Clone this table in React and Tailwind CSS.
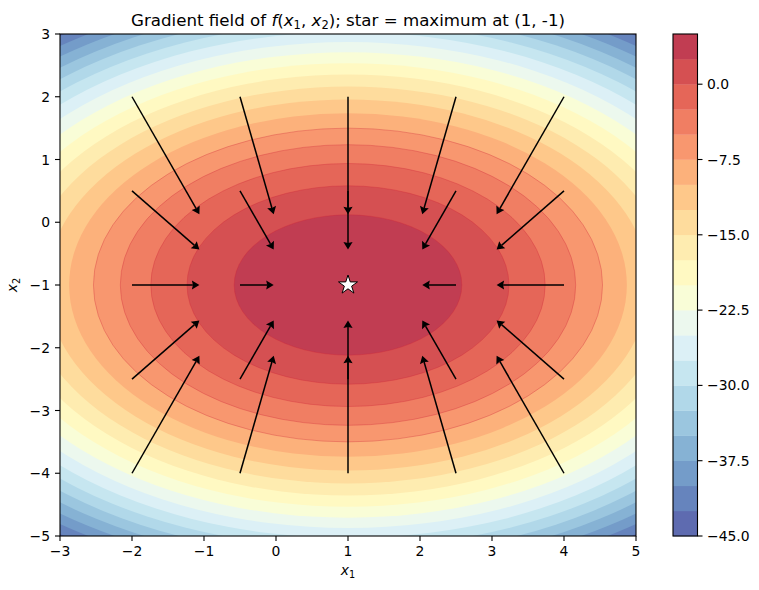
import React from "react";

// RdYlBu control colours (matplotlib), plotted reversed with alpha 0.8
const STOPS = [
  [165, 0, 38], [215, 48, 39], [244, 109, 67], [253, 174, 97], [254, 224, 144],
  [255, 255, 191], [224, 243, 248], [171, 217, 233], [116, 173, 209], [69, 117, 180], [49, 54, 149],
];

const rdylbu = (t) => {
  const s = Math.max(0, Math.min(1, t)) * 10;
  const i = Math.min(9, Math.floor(s));
  const f = s - i;
  const c = STOPS[i].map((v, k) => v + (STOPS[i + 1][k] - v) * f);
  const a = 0.8;
  const [r, g, b] = c.map((v) => Math.round(v * a + 255 * (1 - a)));
  return `rgb(${r},${g},${b})`;
};

// band j spans level -45 + 2.5j .. -45 + 2.5(j+1)
const bandColor = (j) => rdylbu(1 - (j + 0.5) / 20);

const X = (x) => 60 + (x + 3) * 72;
const Y = (y) => 34 + (3 - y) * 62.75;

const GRID = [-2, -0.5, 1, 2.5, 4];
const GRID_Y = [2, 0.5, -1, -2.5, -4];

const arrows = [];
GRID.forEach((gx) => {
  GRID_Y.forEach((gy) => {
    if (gx === 1 && gy === -1) return;
    const k = 0.156;
    const ex = gx + k * -2 * (gx - 1);
    const ey = gy + k * -4 * (gy + 1);
    arrows.push({ sx: X(gx), sy: Y(gy), ex: X(ex), ey: Y(ey) });
  });
});

const Arrow = ({ sx, sy, ex, ey }) => {
  const len = Math.hypot(ex - sx, ey - sy);
  const ux = (ex - sx) / len;
  const uy = (ey - sy) / len;
  const nx = -uy;
  const ny = ux;
  const hl = 7.5;
  const hw = 4.6;
  const notch = 6.5;
  const pts = [
    [ex, ey],
    [ex - ux * hl + nx * hw, ey - uy * hl + ny * hw],
    [ex - ux * notch, ey - uy * notch],
    [ex - ux * hl - nx * hw, ey - uy * hl - ny * hw],
  ]
    .map((p) => p.join(","))
    .join(" ");
  return (
    <g>
      <line x1={sx} y1={sy} x2={ex - ux * notch} y2={ey - uy * notch} stroke="#000" strokeWidth="1.5" />
      <polygon points={pts} fill="#000" />
    </g>
  );
};

const starPoints = (cx, cy, r) => {
  const pts = [];
  for (let i = 0; i < 10; i++) {
    const rr = i % 2 === 0 ? r : r * 0.382;
    const a = -Math.PI / 2 + (i * Math.PI) / 5;
    pts.push(`${cx + rr * Math.cos(a)},${cy + rr * Math.sin(a)}`);
  }
  return pts.join(" ");
};

const Sub = ({ base, sub, size }) => (
  <>
    <tspan fontStyle="italic">{base}</tspan>
    <tspan fontSize={size * 0.7} dy={size * 0.2}>
      {sub}
    </tspan>
  </>
);

const PlotArea = () => {
  const ellipses = [];
  for (let j = 1; j < 20; j++) {
    const R = 50 - 2.5 * j;
    ellipses.push(
      <ellipse
        key={j}
        cx={X(1)}
        cy={Y(-1)}
        rx={Math.sqrt(R) * 72}
        ry={Math.sqrt(R / 2) * 62.75}
        fill={bandColor(j)}
        stroke={j >= 15 ? "rgba(205,35,55,0.45)" : "none"}
        strokeWidth="0.7"
      />
    );
  }

  return (
    <svg width="660" height="556" viewBox="0 34 660 556" className="overflow-visible">
      <defs>
        <clipPath id="axclip">
          <rect x="60" y="34" width="576" height="502" />
        </clipPath>
      </defs>
      <g clipPath="url(#axclip)">
        <rect x="60" y="34" width="576" height="502" fill={bandColor(0)} />
        {ellipses}
      </g>

      {arrows.map((a, i) => (
        <Arrow key={i} {...a} />
      ))}

      <polygon points={starPoints(X(1), Y(-1), 10)} fill="#fff" stroke="#000" strokeWidth="1" />

      <rect x="60" y="34" width="576" height="502" fill="none" stroke="#000" strokeWidth="1.1" />

      {[-3, -2, -1, 0, 1, 2, 3, 4, 5].map((v) => (
        <g key={`x${v}`}>
          <line x1={X(v)} y1="536" x2={X(v)} y2="541" stroke="#000" strokeWidth="1.1" />
          <text x={X(v)} y="556" textAnchor="middle" fontSize="13.9" fill="#000">
            {v < 0 ? `\u2212${-v}` : v}
          </text>
        </g>
      ))}

      {[3, 2, 1, 0, -1, -2, -3, -4, -5].map((v) => (
        <g key={`y${v}`}>
          <line x1="55" y1={Y(v)} x2="60" y2={Y(v)} stroke="#000" strokeWidth="1.1" />
          <text x="50" y={Y(v) + 5} textAnchor="end" fontSize="13.9" fill="#000">
            {v < 0 ? `\u2212${-v}` : v}
          </text>
        </g>
      ))}

      <text x={X(1)} y="575" textAnchor="middle" fontSize="13.9" fill="#000">
        <Sub base="x" sub="1" size={13.9} />
      </text>
      <text transform={`translate(17,${Y(-1)}) rotate(-90)`} textAnchor="middle" fontSize="13.9" fill="#000">
        <Sub base="x" sub="2" size={13.9} />
      </text>
    </svg>
  );
};

const Colorbar = () => {
  const top = 34;
  const bottom = 536;
  const h = (bottom - top) / 20;
  const ticks = [0, -7.5, -15, -22.5, -30, -37.5, -45];
  const cy = (v) => bottom - ((v + 45) / 50) * (bottom - top);
  return (
    <svg width="99" height="556" viewBox="660 34 99 556" className="overflow-visible">
      {Array.from({ length: 20 }, (_, j) => (
        <rect key={j} x="673" y={bottom - (j + 1) * h} width="24.5" height={h + 0.3} fill={bandColor(j)} />
      ))}
      <rect x="673" y={top} width="24.5" height={bottom - top} fill="none" stroke="#000" strokeWidth="1.1" />
      {ticks.map((v) => (
        <g key={v}>
          <line x1="697.5" y1={cy(v)} x2="702.5" y2={cy(v)} stroke="#000" strokeWidth="1.1" />
          <text x="707" y={cy(v) + 5} fontSize="13.9" fill="#000">
            {v < 0 ? `\u2212${(-v).toFixed(1)}` : v.toFixed(1)}
          </text>
        </g>
      ))}
    </svg>
  );
};

export default function App() {
  return (
    <div className="flex flex-col w-[759px] h-[590px] bg-white overflow-hidden font-['DejaVu_Sans','Liberation_Sans',sans-serif]">
      <div className="h-[34px] w-[636px] pl-[60px] pt-[11px] text-center text-[16.67px] leading-[20px] text-black whitespace-nowrap">
        Gradient field of <i>f</i>(<i>x</i>
        <sub className="text-[11.5px]">1</sub>, <i>x</i>
        <sub className="text-[11.5px]">2</sub>); star = maximum at (1, -1)
      </div>
      <div className="flex flex-row">
        <PlotArea />
        <Colorbar />
      </div>
    </div>
  );
}
